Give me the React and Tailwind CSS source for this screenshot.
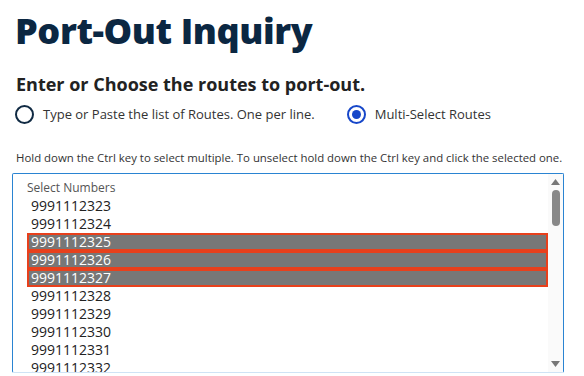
import { useState } from "react";

const numbers = [
  "9991112323",
  "9991112324",
  "9991112325",
  "9991112326",
  "9991112327",
  "9991112328",
  "9991112329",
  "9991112330",
  "9991112331",
  "9991112332",
];

function Radio({ checked, label }) {
  return (
    <label className="flex items-center gap-[9px]">
      {checked ? (
        <span className="w-[19px] h-[19px] rounded-full border-2 border-[#1747c9] flex items-center justify-center">
          <span className="w-[9px] h-[9px] rounded-full bg-[#1747c9]" />
        </span>
      ) : (
        <span className="w-[19px] h-[19px] rounded-full border-2 border-[#102a43]" />
      )}
      <span className="text-[13px] text-[#333]">{label}</span>
    </label>
  );
}

export default function App() {
  const [selected] = useState(["9991112325", "9991112326", "9991112327"]);

  return (
    <div className="w-[584px] h-[376px] overflow-hidden bg-white font-['Open_Sans',sans-serif]">
      <h1 className="pl-[15px] pt-[5px] text-[36px] leading-[52px] font-extrabold text-[#0b2742] tracking-[-0.4px]">
        Port-Out Inquiry
      </h1>
      <h2 className="pl-4 mt-[15px] text-[18px] leading-6 font-bold text-[#222]">
        Enter or Choose the routes to port-out.
      </h2>
      <div className="flex items-center pl-[15px] mt-[9px] gap-[32px]">
        <Radio label="Type or Paste the list of Routes. One per line." />
        <Radio checked label="Multi-Select Routes" />
      </div>
      <p className="pl-4 mt-[25px] text-[11.4px] leading-4 text-[#333]">
        Hold down the Ctrl key to select multiple. To unselect hold down the Ctrl key and click the selected one.
      </p>
      <div className="ml-3 mt-[7px] w-[552px] h-[200px] border border-[#2a84d2] border-b-[#cfe3f5] rounded-[2px] flex">
        <div className="flex-1 pl-[14px] pt-[6px] overflow-hidden">
          <div className="text-[12px] leading-4 text-[#555]">Select Numbers</div>
          <div className="mt-[1px]">
            {numbers.map((n) => {
              const isSel = selected.includes(n);
              return (
                <div
                  key={n}
                  className={
                    isSel
                      ? "h-[18px] leading-[14px] border-2 border-[#e8401c] bg-[#777] text-white pl-[2px] text-[14px]"
                      : "h-[18px] leading-[18px] pl-[4px] text-[14px] text-[#222]"
                  }
                >
                  {n}
                </div>
              );
            })}
          </div>
        </div>
        <div className="w-[15px] bg-[#fafafa] flex flex-col items-center py-[5px]">
          <svg width="9" height="6" viewBox="0 0 9 6">
            <path d="M4.5 0 L9 6 L0 6 Z" fill="#777" />
          </svg>
          <div className="mt-[5px] w-[8px] h-[36px] rounded-full bg-[#888]" />
          <div className="flex-1" />
          <svg width="9" height="6" viewBox="0 0 9 6">
            <path d="M0 0 L9 0 L4.5 6 Z" fill="#777" />
          </svg>
        </div>
      </div>
    </div>
  );
}
